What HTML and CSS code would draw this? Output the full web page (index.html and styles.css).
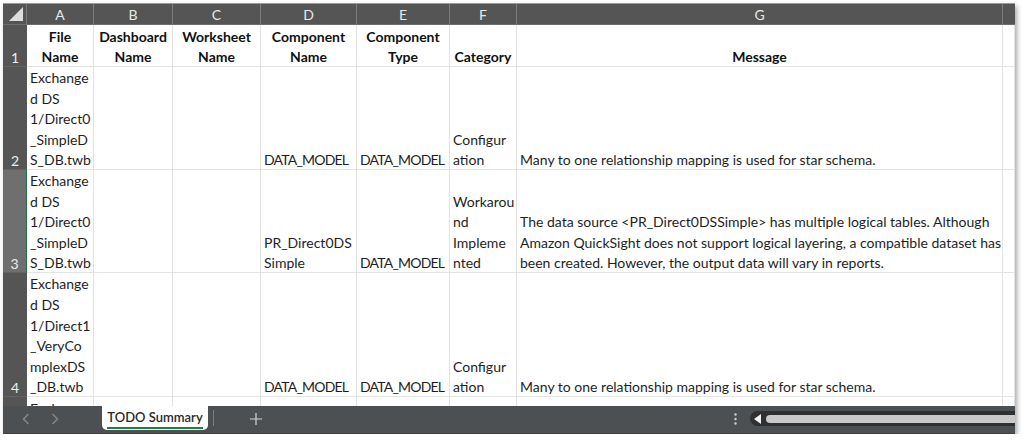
FILE: index.html
```html
<!DOCTYPE html>
<html lang="en">
<head>
  <meta charset="UTF-8" />
  <title>TODO Summary</title>
  <link rel="stylesheet" href="styles.css">
</head>
<body>

<div class="window">
  <!-- Worksheet grid -->
  <div class="sheet">
    <div class="corner"><span class="tri"></span></div>
    <div class="col-head">A</div>
    <div class="col-head">B</div>
    <div class="col-head">C</div>
    <div class="col-head">D</div>
    <div class="col-head">E</div>
    <div class="col-head">F</div>
    <div class="col-head">G</div>
    <div class="col-head last"></div>

    <div class="row-head">1</div>
    <div class="cell head">File<br>Name</div>
    <div class="cell head">Dashboard<br>Name</div>
    <div class="cell head">Worksheet<br>Name</div>
    <div class="cell head">Component<br>Name</div>
    <div class="cell head">Component<br>Type</div>
    <div class="cell head">Category</div>
    <div class="cell head">Message</div>
    <div class="cell"></div>

    <div class="row-head">2</div>
    <div class="cell">Exchange<br>d DS<br>1/Direct0<br>_SimpleD<br>S_DB.twb</div>
    <div class="cell"></div>
    <div class="cell"></div>
    <div class="cell caps">DATA_MODEL</div>
    <div class="cell caps">DATA_MODEL</div>
    <div class="cell">Configur<br>ation</div>
    <div class="cell">Many to one relationship mapping is used for star schema.</div>
    <div class="cell"></div>

    <div class="row-head active">3</div>
    <div class="cell">Exchange<br>d DS<br>1/Direct0<br>_SimpleD<br>S_DB.twb</div>
    <div class="cell"></div>
    <div class="cell"></div>
    <div class="cell">PR_Direct0DS<br>Simple</div>
    <div class="cell caps">DATA_MODEL</div>
    <div class="cell">Workarou<br>nd<br>Impleme<br>nted</div>
    <div class="cell">The data source &lt;PR_Direct0DSSimple&gt; has multiple logical tables. Although<br>Amazon QuickSight does not support logical layering, a compatible dataset has<br>been created. However, the output data will vary in reports.</div>
    <div class="cell"></div>

    <div class="row-head">4</div>
    <div class="cell">Exchange<br>d DS<br>1/Direct1<br>_VeryCo<br>mplexDS<br>_DB.twb</div>
    <div class="cell"></div>
    <div class="cell"></div>
    <div class="cell caps">DATA_MODEL</div>
    <div class="cell caps">DATA_MODEL</div>
    <div class="cell">Configur<br>ation</div>
    <div class="cell">Many to one relationship mapping is used for star schema.</div>
    <div class="cell"></div>

    <div class="row-head"></div>
    <div class="cell top">Exchange</div>
    <div class="cell top"></div>
    <div class="cell top"></div>
    <div class="cell top"></div>
    <div class="cell top"></div>
    <div class="cell top"></div>
    <div class="cell top"></div>
    <div class="cell top"></div>
  </div>

  <!-- Sheet tabs and horizontal scroll -->
  <div class="tabbar">
    <div class="nav">
      <svg width="8" height="12" viewBox="0 0 8 12"><path d="M6.5 1 L1.5 6 L6.5 11" fill="none" stroke="#7f8589" stroke-width="1.6"/></svg>
      <svg width="8" height="12" viewBox="0 0 8 12"><path d="M1.5 1 L6.5 6 L1.5 11" fill="none" stroke="#7f8589" stroke-width="1.6"/></svg>
    </div>
    <div class="tab"><span>TODO Summary</span></div>
    <div class="sep"></div>
    <div class="add">
      <svg width="12" height="12" viewBox="0 0 12 12"><path d="M6 0 V12 M0 6 H12" stroke="#d6d6d6" stroke-width="1.2"/></svg>
    </div>
    <div class="spacer"></div>
    <div class="dots">
      <svg width="3" height="12" viewBox="0 0 3 12"><circle cx="1.5" cy="1.5" r="1.2" fill="#cfcfcf"/><circle cx="1.5" cy="6" r="1.2" fill="#cfcfcf"/><circle cx="1.5" cy="10.5" r="1.2" fill="#cfcfcf"/></svg>
    </div>
    <div class="hscroll">
      <svg width="8" height="10" viewBox="0 0 8 10"><path d="M7 0 L7 10 L0 5 Z" fill="#f2f2f2"/></svg>
      <div class="thumb"></div>
    </div>
  </div>
</div>

</body>
</html>
```

FILE: styles.css
```css
body {
  margin: 0;
  background: white;
  font-family: Lato, "Liberation Sans", sans-serif;
}
.window {
  margin: 3px 0 0 3px;
  width: 1012px;
  height: 431px;
  display: flex;
  flex-direction: column;
  overflow: hidden;
  border-top: 1px solid #9a9a9a;
  box-sizing: border-box;
  box-shadow: 2px 3px 5px rgba(0,0,0,0.35);
}

/* Grid */
.sheet {
  flex: 1;
  overflow: hidden;
  display: grid;
  grid-template-columns: 24px 67px 79px 88px 96px 93px 67px 486px 12px;
  grid-template-rows: 21px 42px 103px 103px 124px 124px;
  font-size: 14px;
  color: #1e1e1e;
}
.corner {
  background: #555;
  border-right: 1px solid #777;
  border-bottom: 1px solid #6e6e6e;
  position: relative;
}
.corner .tri {
  position: absolute;
  right: 3px;
  bottom: 3px;
  width: 0;
  height: 0;
  border-left: 14px solid transparent;
  border-bottom: 14px solid #dcdcdc;
}
.col-head {
  background: #555;
  color: #e8e8e8;
  text-align: center;
  line-height: 21px;
  border-right: 1px solid #7c7c7c;
  border-bottom: 1px solid #6e6e6e;
}
.col-head.last {
  border-right: none;
}
.row-head {
  background: #555;
  color: #ececec;
  display: flex;
  align-items: flex-end;
  justify-content: center;
  line-height: 16px;
  border-bottom: 1px solid #626262;
  box-sizing: border-box;
}
.row-head.active {
  background: #6f6f6f;
  border-right: 1px solid #1e7145;
}
.cell {
  display: flex;
  flex-direction: column;
  justify-content: flex-end;
  padding: 0 3px;
  line-height: 20.6px;
  white-space: nowrap;
  overflow: hidden;
  border-right: 1px solid #e2e2e2;
  border-bottom: 1px solid #e4e4e4;
  box-sizing: border-box;
}
/* lets the last text line sit a little lower, like Excel does */
.cell::after {
  content: "";
  margin-top: -2px;
}
.cell.head {
  font-weight: bold;
  text-align: center;
  color: #111;
}
.cell.caps {
  letter-spacing: -0.8px;
}
.cell.top {
  justify-content: flex-start;
  padding-top: 2px;
}

/* Bottom bar */
.tabbar {
  height: 27px;
  flex-shrink: 0;
  background: #4d5052;
  display: flex;
  align-items: flex-start;
  border-bottom: 1px solid #3e4042;
}
.nav {
  width: 99px;
  height: 26px;
  display: flex;
  align-items: center;
  gap: 21px;
  padding-left: 19px;
  box-sizing: border-box;
}
.tab {
  width: 106px;
  height: 24px;
  background: white;
  border-radius: 0 0 5px 5px;
  display: flex;
  justify-content: center;
  font-size: 13px;
  font-weight: 600;
  color: #2a2a2a;
}
.tab span {
  line-height: 19px;
  height: 19px;
  margin-top: 2px;
  border-bottom: 2px solid #1e7e45;
}
.sep {
  width: 1px;
  height: 16px;
  margin: 4px 0 0 5px;
  background: #777b7e;
}
.add {
  margin-left: 36px;
  height: 26px;
  display: flex;
  align-items: center;
}
.spacer {
  flex: 1;
}
.dots {
  height: 26px;
  display: flex;
  align-items: center;
  margin-right: 13px;
}
.hscroll {
  width: 265px;
  height: 15px;
  margin-top: 5px;
  background: #2f3031;
  border-radius: 8px 0 0 8px;
  display: flex;
  align-items: center;
  gap: 4px;
  padding-left: 4px;
  box-sizing: border-box;
}
.thumb {
  flex: 1;
  height: 8px;
  background: #c9c9c9;
  border-radius: 4px 0 0 4px;
}
```
